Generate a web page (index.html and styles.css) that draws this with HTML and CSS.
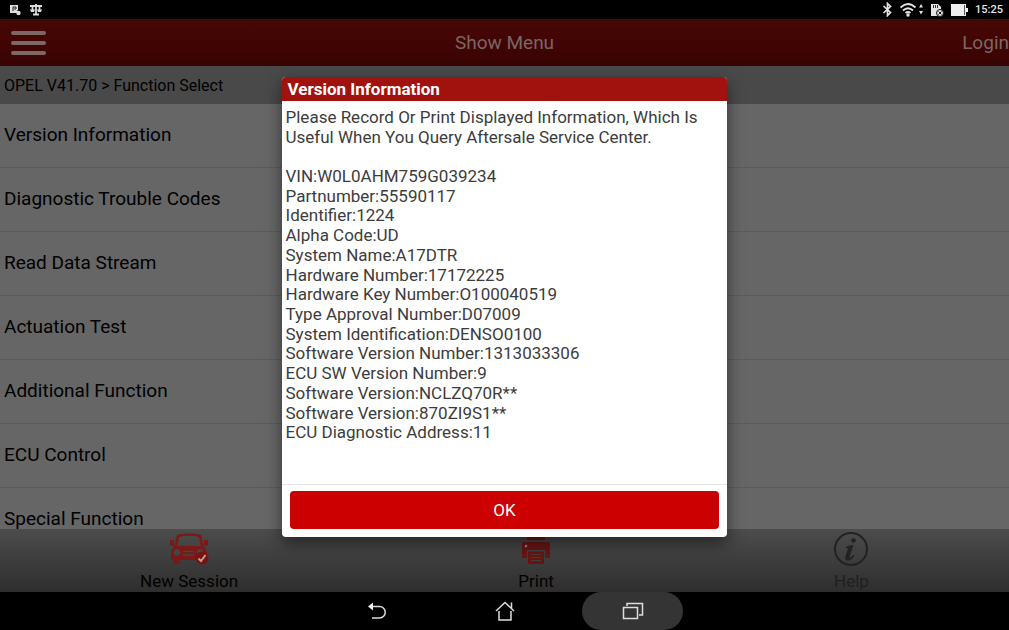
FILE: index.html
```html
<!DOCTYPE html>
<html lang="en">
<head>
<meta charset="utf-8">
<meta name="viewport" content="width=device-width, initial-scale=1">
<title>Version Information</title>
<link rel="stylesheet" href="styles.css">
</head>
<body>
<div class="status-bar">
  <div class="status-group">
    <svg width="12" height="12" viewBox="0 0 12 12" aria-hidden="true"><path fill="#ddd" d="M0 1h8v5H7l2 3H0z"/><path fill="none" stroke="#222" d="M3 7V3h3v2H4"/><circle cx="8.500" cy="9" r="2.200" fill="#ddd"/></svg>
    <svg width="12" height="12" viewBox="0 0 12 12" aria-hidden="true"><path fill="none" stroke="#ddd" stroke-width="1.800" d="M0 2h12M6 0v11M3 10.500h6M2.500 2v5M9.500 2v5"/><path fill="#ddd" d="M0 5.500h5L4 8H1zM7 5.500h5L11 8H8z"/></svg>
  </div>
  <div class="status-group status-right">
    <svg width="11" height="15" viewBox="0 0 11 15" aria-hidden="true"><path fill="none" stroke="#e4e4e4" stroke-width="1.700" d="M1.500 4l7 6.500-3 3V1.500l3 3-7 6.500"/></svg>
    <svg width="24" height="15" viewBox="0 0 24 15" aria-hidden="true"><g fill="none" stroke="#e4e4e4" stroke-width="1.800"><path d="M0.500 5.500q7.500-7 15 0M3 8.500q5-4.500 10 0M5.500 11q2.500-2 5 0"/></g><circle cx="8" cy="13" r="1.700" fill="#e4e4e4"/><path fill="#e4e4e4" d="M19 5.500l2-3.500 2 3.500zM19 9l2 3.500L23 9z"/></svg>
    <svg width="13" height="14" viewBox="0 0 13 14" aria-hidden="true"><path fill="#e4e4e4" d="M0 1h7l3 3v9H0z"/><path stroke="#333" d="M2.500 2v3M4.500 2v3M6.500 2v3"/><circle cx="9" cy="10" r="3.500" fill="#e4e4e4" stroke="#111"/><path stroke="#111" fill="none" d="M7.500 8.500l3 3M10.500 8.500l-3 3"/></svg>
    <svg width="17" height="12" viewBox="0 0 17 12" aria-hidden="true"><path fill="#eee" d="M0 0h15v4h2v4h-2v4H0z"/><path stroke="#555" d="M13.500 1v10"/></svg>
    <span class="clock">15:25</span>
  </div>
</div>

<header class="app-bar">
  <button class="menu-button" type="button" aria-label="Menu"><span class="menu-line"></span><span class="menu-line"></span><span class="menu-line"></span></button>
  <h1 class="app-title">Show Menu</h1>
  <a class="login" href="#login">Login</a>
</header>

<main class="content">
  <div class="breadcrumb">OPEL V41.70 &gt; Function Select</div>
  <nav class="functions" aria-label="Functions">
    <a class="function" href="#version">Version Information</a>
    <a class="function" href="#codes">Diagnostic Trouble Codes</a>
    <a class="function" href="#stream">Read Data Stream</a>
    <a class="function" href="#actuation">Actuation Test</a>
    <a class="function" href="#additional">Additional Function</a>
    <a class="function" href="#ecu">ECU Control</a>
    <a class="function" href="#special">Special Function</a>
  </nav>
</main>

<footer class="tool-bar">
  <button class="tool" type="button">
    <svg width="40" height="34" viewBox="0 0 40 34" aria-hidden="true">
      <path fill="none" stroke="#7a1915" stroke-width="2.500" d="M6.500 15L9 4q11-3 22 0l2.500 11"/>
      <path fill="#7a1915" d="M1 8h4v6H3q-2 0-2-2zM39 8h-4v6h2q2 0 2-2zM6 14h28q4 3 4 7v7H2v-7q0-4 4-7zM4 28h7v2q0 2-2 2H6q-2 0-2-2z"/>
      <circle cx="8" cy="20.500" r="3.200" fill="#454545"/><circle cx="31" cy="20.500" r="3.200" fill="#454545"/>
      <path stroke="#454545" stroke-width="1.500" d="M14 19.500h11M14 23h11"/>
      <circle cx="33" cy="26" r="6.500" fill="#7a120f"/>
      <path fill="none" stroke="#b8a0a0" stroke-width="2" d="M29.500 26.500l2.500 2.500 4.500-6"/>
    </svg>
    <span>New Session</span>
  </button>
  <button class="tool" type="button">
    <svg width="30" height="34" viewBox="0 0 30 34" aria-hidden="true">
      <path fill="#681512" d="M6 2h18v6H6zM3 10h24q2 0 2 2v14h-5v-8H6v8H1V12q0-2 2-2z"/>
      <path fill="#681512" d="M7 19.500h16V31q0 1-1 1H8q-1 0-1-1z"/>
      <path stroke="#404040" stroke-width="1.200" d="M10 22.500h10M10 25.500h10M10 28.500h10"/><circle cx="5" cy="14" r="1.300" fill="#888"/>
    </svg>
    <span>Print</span>
  </button>
  <button class="tool tool-muted" type="button">
    <svg width="34" height="34" viewBox="0 0 34 34" aria-hidden="true">
      <circle cx="17" cy="17" r="16" fill="none" stroke="#222" stroke-width="2"/>
      <circle cx="19.500" cy="8.500" r="2.300" fill="#222"/><path fill="#222" d="M12 15q4-2 7.500-2l-4 12q0 2 4-2l1 .5q-3 5.500-7 5-3-.5-2-4l2.500-8q0-1-2 0z"/>
    </svg>
    <span>Help</span>
  </button>
</footer>

<nav class="system-nav" aria-label="System">
  <button class="system-button" type="button" aria-label="Back"><svg width="20" height="20" viewBox="0 0 20 20"><path fill="none" stroke="#ddd" stroke-width="1.500" d="M4 5.500h8.500a5.700 5.700 0 0 1 0 11.500H5"/><path fill="#eee" d="M1 5.500l5-4v8z"/></svg></button>
  <button class="system-button" type="button" aria-label="Home"><svg width="20" height="20" viewBox="0 0 20 20"><path fill="none" stroke="#ddd" stroke-width="1.500" d="M1 10l9-8.500 9 8.500M4 10v9h12v-9M16.500 7.500V1.500"/></svg></button>
  <button class="system-button system-button-active" type="button" aria-label="Recent apps"><svg width="22" height="18" viewBox="0 0 22 18"><path fill="none" stroke="#ddd" stroke-width="1.500" d="M1.500 5.500h14v11h-14zM5 4V1.500h15.500V13H17"/></svg></button>
</nav>

<section class="dialog" role="dialog" aria-modal="true" aria-labelledby="dialog-title">
  <h2 class="dialog-title" id="dialog-title">Version Information</h2>
  <div class="dialog-body">
    <p class="notice">Please Record Or Print Displayed Information, Which Is Useful When You Query Aftersale Service Center.</p>
    <ul class="details">
      <li>VIN:W0L0AHM759G039234</li>
      <li>Partnumber:55590117</li>
      <li>Identifier:1224</li>
      <li>Alpha Code:UD</li>
      <li>System Name:A17DTR</li>
      <li>Hardware Number:17172225</li>
      <li>Hardware Key Number:O100040519</li>
      <li>Type Approval Number:D07009</li>
      <li>System Identification:DENSO0100</li>
      <li>Software Version Number:1313033306</li>
      <li>ECU SW Version Number:9</li>
      <li>Software Version:NCLZQ70R**</li>
      <li>Software Version:870ZI9S1**</li>
      <li>ECU Diagnostic Address:11</li>
    </ul>
  </div>
  <div class="dialog-actions"><button class="ok-button" type="button">OK</button></div>
</section>
</body>
</html>
```
FILE: styles.css
```css
* { box-sizing: border-box; }

body {
  margin: 0;
  height: 100vh;
  display: flex;
  flex-direction: column;
  position: relative;
  overflow: hidden;
  background: #000;
  color: #000;
  font-family: Roboto, "Noto Sans", sans-serif;
  font-size: 17px;
}

button {
  border: 0;
  padding: 0;
  background: none;
  color: inherit;
  font: inherit;
}

a { color: inherit; text-decoration: none; }
svg { display: block; }

.status-bar {
  flex: none;
  height: 19px;
  display: flex;
  align-items: center;
  justify-content: space-between;
  padding: 0 6px 0 10px;
  color: #e4e4e4;
}

.status-group { display: flex; align-items: center; gap: 8px; }
.status-right { gap: 7px; }
.clock { font-size: 11px; line-height: 16px; font-weight: 500; }

.app-bar {
  flex: none;
  height: 47px;
  display: grid;
  grid-template-columns: 1fr auto 1fr;
  align-items: center;
  background: linear-gradient(#460804, #400404 60%, #380303);
  color: #7b6663;
}

.menu-button {
  width: 35px;
  margin-left: 11px;
  display: flex;
  flex-direction: column;
  gap: 6px;
}

.menu-line { height: 4px; border-radius: 2px; background: #7d6866; }
.app-title { margin: 0; font-size: 19px; font-weight: 400; }
.login { justify-self: end; font-size: 19px; }

.content {
  flex: 1;
  min-height: 0;
  overflow: hidden;
  background: #666;
}

.breadcrumb {
  height: 38px;
  padding: 0 4px;
  background: #494949;
  font-size: 16px;
  line-height: 40px;
}

.functions { display: flex; flex-direction: column; }

.function {
  padding: 21px 4px 22px;
  border-bottom: 1px solid #5b5b5b;
  font-size: 19px;
  line-height: 20px;
}

.tool-bar {
  flex: none;
  height: 63px;
  display: flex;
  justify-content: space-around;
  background: linear-gradient(#4c4c4c, #2e2e2e);
}

.tool {
  display: flex;
  flex-direction: column;
  align-items: center;
  justify-content: flex-end;
  gap: 4px;
  line-height: 22px;
}

.tool-muted { color: #202020; }

.system-nav {
  flex: none;
  height: 38px;
  display: flex;
  justify-content: center;
  gap: 27px;
}

.system-button {
  width: 101px;
  display: flex;
  align-items: center;
  justify-content: center;
  border-radius: 19px;
}

.system-button-active { background: #343434; }

.dialog {
  position: absolute;
  top: 77px;
  left: calc(28% - 1px);
  right: calc(28% - 1px);
  overflow: hidden;
  border-radius: 4px;
  background: #fff;
  color: #3c3c3c;
  box-shadow: 0 6px 16px rgba(0, 0, 0, 0.5);
}

.dialog-title {
  margin: 0;
  padding: 1px 6px 0;
  background: #a1110d;
  color: #fff;
  font-size: 17px;
  line-height: 23px;
  font-weight: 700;
}

.dialog-body {
  padding: 6px 4px 42px;
  font-size: 17px;
  line-height: 20px;
}

.notice { margin: 0 0 19px; }

.details {
  height: 276px;
  margin: 0;
  padding: 0;
  display: grid;
  grid-auto-rows: 1fr;
  list-style: none;
}

.details li { min-height: 0; height: 19px; }

.dialog-actions {
  padding: 6px 8px 8px;
  border-top: 1px solid #e4e4e4;
}

.ok-button {
  display: block;
  width: 100%;
  height: 38px;
  border-radius: 4px;
  background: #c00;
  color: #fff;
  font-size: 17px;
}
```
